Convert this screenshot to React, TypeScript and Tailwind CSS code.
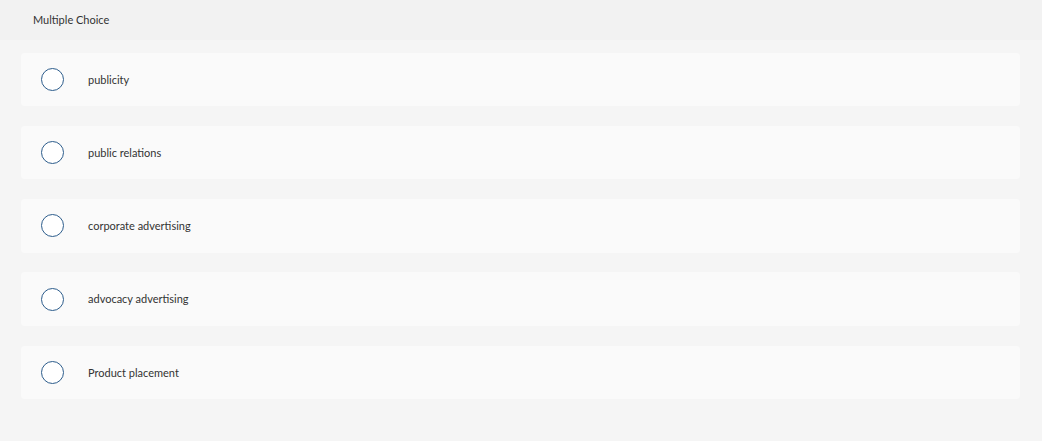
const OPTIONS = [
  "publicity",
  "public relations",
  "corporate advertising",
  "advocacy advertising",
  "Product placement",
];

export default function App() {
  return (
    <div className="w-[1042px] h-[441px] bg-[#f5f5f5] text-[#333] font-['Lato','Open_Sans',sans-serif]">
      <div className="h-10 bg-[#f2f2f2] flex items-center pl-[33px] text-[11px]">Multiple Choice</div>
      <div className="flex flex-col gap-[19.75px] pt-[12.5px] pl-[21px] pr-[22px]">
        {OPTIONS.map((opt) => (
          <label key={opt} className="h-[53.5px] bg-[#fafafa] rounded flex items-center pl-[20px] cursor-pointer">
            <span className="w-[23px] h-[23px] rounded-full border-[1.5px] border-[#2d5d8c] bg-white shrink-0" />
            <span className="ml-[24px] pt-[1px] text-[11px]">{opt}</span>
          </label>
        ))}
      </div>
    </div>
  );
}
